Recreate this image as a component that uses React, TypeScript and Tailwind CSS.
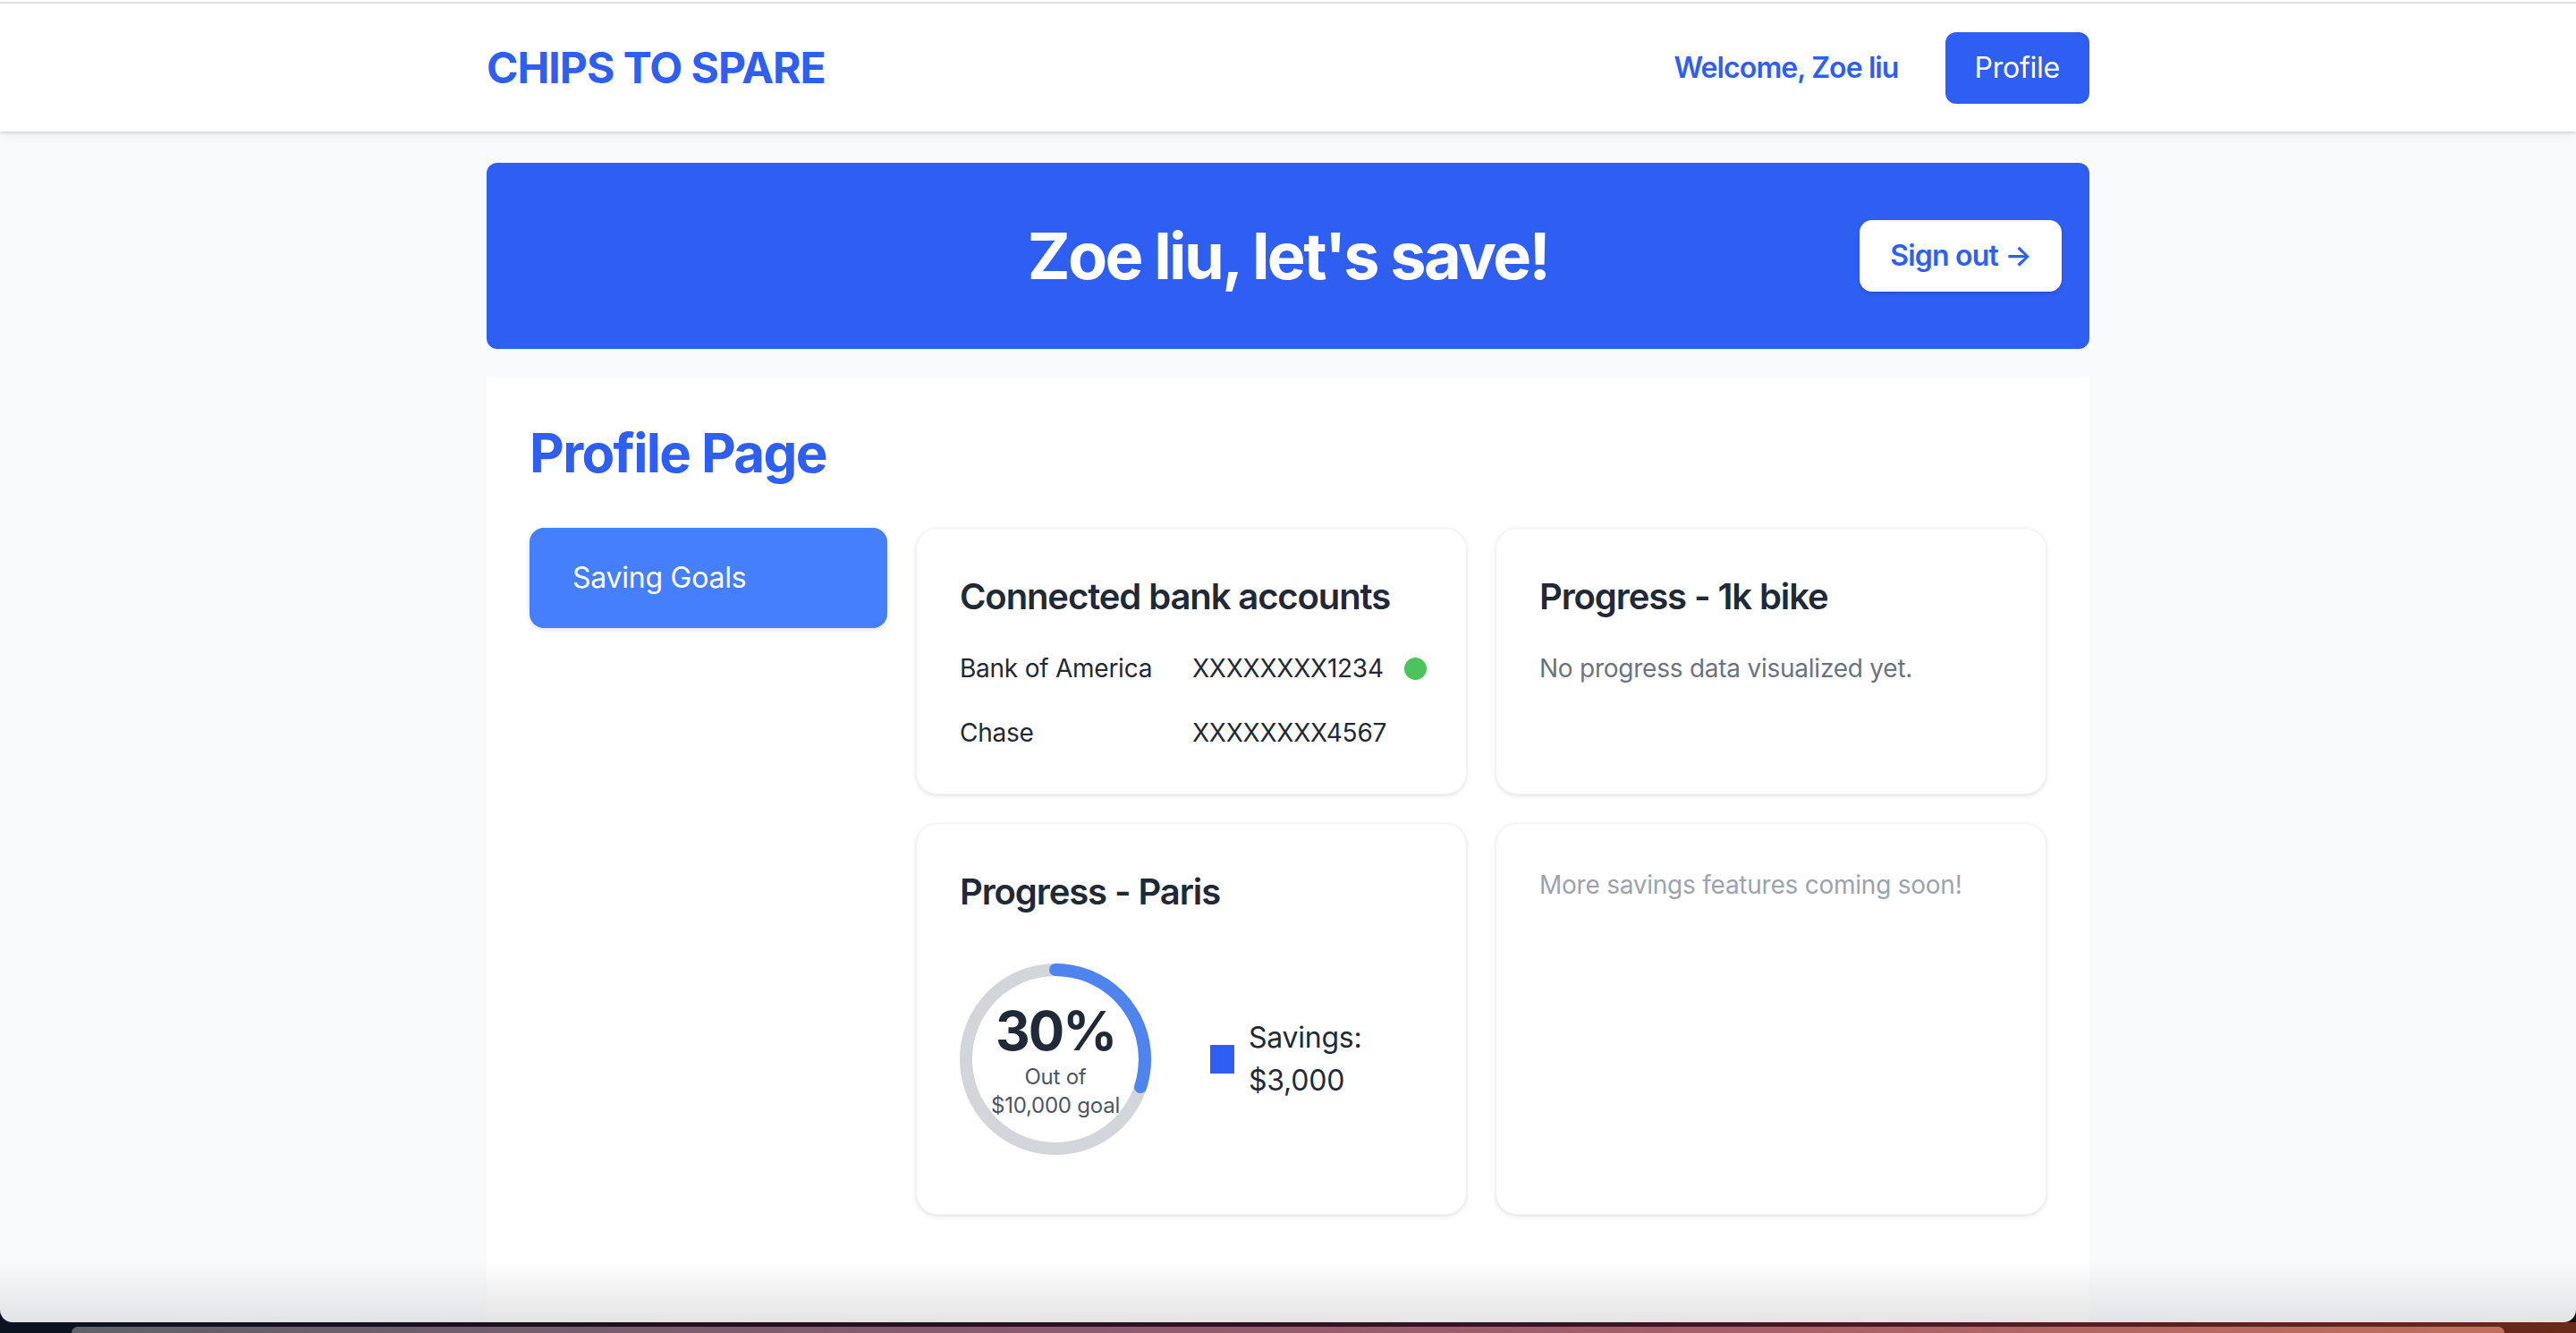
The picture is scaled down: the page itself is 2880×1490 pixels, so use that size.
import React from 'react';

const BLUE = '#2f5ef2';

const Donut: React.FC<{ percent: number }> = ({ percent }) => {
  const r = 100;
  const c = 2 * Math.PI * r;
  return (
    <div className="grid place-items-center shrink-0 w-[214px] h-[214px]">
      <svg width="214" height="214" viewBox="0 0 214 214" className="col-start-1 row-start-1">
        <circle cx="107" cy="107" r={r} fill="none" stroke="#d2d5da" strokeWidth="14" />
        <circle
          cx="107"
          cy="107"
          r={r}
          fill="none"
          stroke="#4f83ee"
          strokeWidth="14"
          strokeLinecap="round"
          strokeDasharray={`${(c * percent) / 100} ${c}`}
          transform="rotate(-90 107 107)"
        />
      </svg>
      <div className="col-start-1 row-start-1 flex flex-col items-center text-center">
        <span className="text-[60px] leading-[72px] font-bold text-[#1f2937] tracking-[-2px]">{percent}%</span>
        <span className="text-[24px] leading-[32px] text-[#4b5563]">Out of</span>
        <span className="text-[24px] leading-[32px] text-[#4b5563]">$10,000 goal</span>
      </div>
    </div>
  );
};

const Card: React.FC<{ className?: string; children: React.ReactNode }> = ({ className = '', children }) => (
  <div
    className={`bg-white rounded-[24px] border border-[#f1f2f4] shadow-[0_2px_6px_rgba(0,0,0,0.08),0_1px_3px_rgba(0,0,0,0.05)] p-[48px] ${className}`}
  >
    {children}
  </div>
);

const CardTitle: React.FC<{ children: React.ReactNode; className?: string }> = ({ children, className = '' }) => (
  <h3 className={`text-[40px] leading-[56px] font-semibold text-[#1f2937] tracking-[-1.1px] ${className}`}>{children}</h3>
);

const accounts = [
  { bank: 'Bank of America', number: 'XXXXXXXX1234', active: true },
  { bank: 'Chase', number: 'XXXXXXXX4567', active: false },
];

export default function App() {
  return (
    <div
      className="h-[1490px] flex flex-col overflow-hidden bg-[#0d1220] tracking-[-0.015em]"
      style={{ fontFamily: 'Inter, "Noto Sans", sans-serif' }}
    >
      {/* browser window */}
      <div className="flex-1 flex flex-col bg-[linear-gradient(to_bottom,#f9fafb_calc(100%-70px),#e2e3e6)] rounded-b-[14px] overflow-hidden">
        <div className="h-[2px] bg-white" />
        <div className="h-[2px] bg-[#e2e2e2]" />

        {/* Top nav */}
        <header className="relative z-10 bg-white shadow-[0_2px_3px_rgba(0,0,0,0.1),0_4px_12px_rgba(0,0,0,0.06)]">
          <div className="max-w-[1792px] mx-auto flex items-center justify-between pt-[32px] pb-[31px]">
            <span className="text-[48px] leading-[64px] font-bold text-[#2f5ef2] tracking-[-1px]">CHIPS TO SPARE</span>
            <div className="flex items-center gap-[52px]">
              <span className="text-[32px] leading-[48px] font-semibold text-[#2f5ef2] tracking-[-0.9px]">Welcome, Zoe liu</span>
              <button className="bg-[#2f5ef2] text-white text-[32px] leading-[48px] px-[33px] py-[16px] rounded-[12px]">
                Profile
              </button>
            </div>
          </div>
        </header>

        <main className="flex-1 flex flex-col w-[1792px] mx-auto pt-[35px]">
          {/* Banner */}
          <div className="grid grid-cols-[1fr_auto_1fr] items-center h-[208px] px-[31px] rounded-[12px] mb-[32px]" style={{ backgroundColor: BLUE }}>
            <div />
            <h1 className="text-[72px] leading-[80px] font-bold text-white tracking-[-2.6px]">Zoe liu, let's save!</h1>
            <div className="flex justify-end">
              <button className="bg-white text-[#2f5ef2] text-[32px] leading-[48px] font-semibold tracking-[-0.8px] px-[34px] py-[16px] rounded-[14px] shadow-[0_2px_4px_rgba(0,0,0,0.15)]">
                Sign out →
              </button>
            </div>
          </div>

          {/* Profile panel */}
          <section className="flex-1 bg-[linear-gradient(to_bottom,#ffffff_calc(100%-70px),#e4e4e4)] px-[48px] pt-[48px]">
            <h2 className="text-[60px] leading-[72px] font-bold text-[#2f5ef2] mb-[48px] tracking-[-1.7px]">Profile Page</h2>

            <div className="flex items-start gap-[32px]">
              <aside className="w-[400px] shrink-0">
                <button className="w-full h-[112px] text-left px-[48px] rounded-[16px] bg-[#457ffb] text-white text-[32px] leading-[48px] shadow-[0_2px_6px_rgba(0,0,0,0.12)]">
                  Saving Goals
                </button>
              </aside>

              <div className="flex-1 grid grid-cols-2 gap-[32px]">
                {/* Bank accounts */}
                <Card>
                  <CardTitle className="mb-[32px]">Connected bank accounts</CardTitle>
                  <div className="flex flex-col gap-[32px]">
                    {accounts.map((a) => (
                      <div key={a.number} className="flex items-center text-[28px] leading-[40px] text-[#1f2937]">
                        <span className="w-[260px] shrink-0">{a.bank}</span>
                        <span className="shrink-0">{a.number}</span>
                        {a.active && <span className="ml-[23px] w-[25px] h-[25px] shrink-0 rounded-full bg-[#4cc45c]" />}
                      </div>
                    ))}
                  </div>
                </Card>

                {/* Bike */}
                <Card>
                  <CardTitle className="mb-[32px]">Progress - 1k bike</CardTitle>
                  <p className="text-[28px] leading-[40px] text-[#6b7280]">No progress data visualized yet.</p>
                </Card>

                {/* Paris */}
                <Card className="pb-[66px]">
                  <CardTitle>Progress - Paris</CardTitle>
                  <div className="mt-[52px] flex items-center gap-[66px]">
                    <Donut percent={30} />
                    <div className="flex items-center gap-[16px]">
                      <span className="w-[27px] h-[32px] shrink-0" style={{ backgroundColor: BLUE }} />
                      <p className="text-[32px] leading-[48px] text-[#1f2937]">
                        Savings:
                        <br />
                        $3,000
                      </p>
                    </div>
                  </div>
                </Card>

                {/* Coming soon */}
                <Card>
                  <p className="text-[28px] leading-[40px] text-[#9ca3af]">More savings features coming soon!</p>
                </Card>
              </div>
            </div>
          </section>
        </main>
      </div>

      {/* desktop strip below the window */}
      <div className="h-[12px] bg-[linear-gradient(to_right,#0b1220,#25101e_30%,#3a1228_60%,#6a2a1a)] pt-[5px] px-[80px]">
        <div className="h-[7px] rounded-t-[8px] bg-[linear-gradient(to_right,#5f6169,#8a5a70_40%,#a86068_70%,#c06f5c)]" />
      </div>
    </div>
  );
}
